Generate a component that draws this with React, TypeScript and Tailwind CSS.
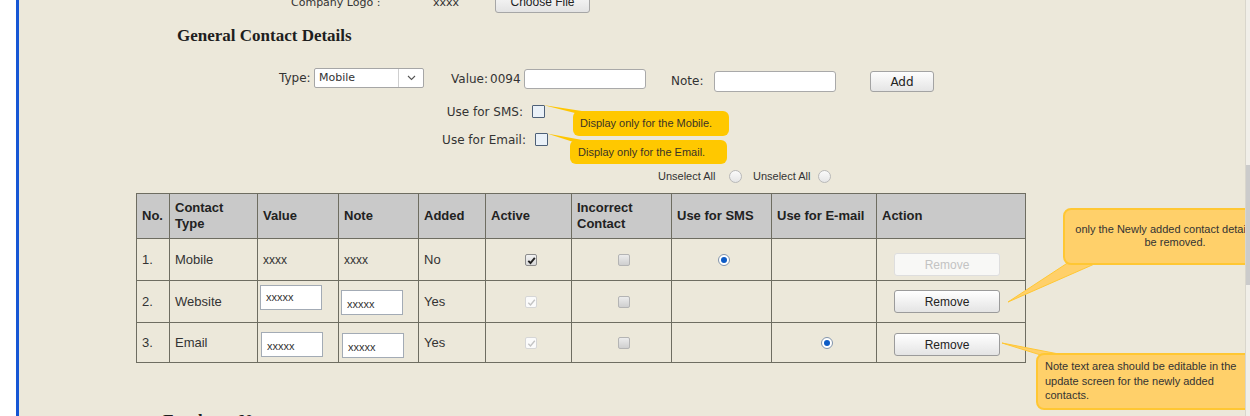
import React from 'react'

// Page coordinates: main panel starts at x=19 (white gutter 16px + blue rule 3px)

function CheckBox({ state }: { state: 'on' | 'onDisabled' | 'offDisabled' }) {
  if (state === 'on') {
    return (
      <span className="inline-flex h-[12px] w-[12px] items-center justify-center rounded-[2px] border border-[#8c8c8c] bg-gradient-to-b from-[#f2f2f2] to-[#d9d9d9] align-middle">
        <svg width="9" height="9" viewBox="0 0 9 9">
          <path d="M1.3 4.8 L3.5 7 L7.8 1.8" fill="none" stroke="#222" strokeWidth="1.9" />
        </svg>
      </span>
    )
  }
  if (state === 'onDisabled') {
    return (
      <span className="inline-flex h-[12px] w-[12px] items-center justify-center rounded-[2px] border border-[#d6d6d6] bg-[#fbfbfb] align-middle">
        <svg width="9" height="9" viewBox="0 0 9 9">
          <path d="M1.3 4.8 L3.5 7 L7.8 1.8" fill="none" stroke="#c4c4c4" strokeWidth="1.4" />
        </svg>
      </span>
    )
  }
  return (
    <span className="inline-block h-[12px] w-[12px] rounded-[2px] border border-[#b4b4b4] bg-gradient-to-b from-[#ececec] to-[#cfcfcf] align-middle" />
  )
}

function Radio({ checked }: { checked?: boolean }) {
  return (
    <span
      className={
        checked
          ? 'inline-flex h-[12px] w-[12px] items-center justify-center rounded-full border border-[#8294ab] bg-white align-middle'
          : 'inline-flex h-[13px] w-[13px] items-center justify-center rounded-full border border-[#b9b9b9] bg-gradient-to-b from-[#fafafa] to-[#e6e6e6] align-middle'
      }
    >
      {checked && <span className="h-[6px] w-[6px] rounded-full bg-[#0c5bc6]" />}
    </span>
  )
}

function RemoveBtn({ disabled }: { disabled?: boolean }) {
  return (
    <div
      className={
        disabled
          ? 'flex h-[23px] w-[106px] items-center justify-center rounded-[3px] border border-[#dedede] bg-[#f8f8f6] text-[12px] text-[#c3c3c3]'
          : 'flex h-[23px] w-[106px] items-center justify-center rounded-[3px] border border-[#9b9b9b] bg-gradient-to-b from-[#ffffff] to-[#e4e4e4] text-[12px] text-[#222]'
      }
    >
      Remove
    </div>
  )
}

function CellInput({ top }: { top?: boolean }) {
  return (
    <div
      className={
        top
          ? 'flex h-[25px] w-[62px] items-start border border-[#a3abb5] bg-white pl-[5px] pt-[3px] text-[11px] text-[#333]'
          : 'flex h-[25px] w-[62px] items-center border border-[#a3abb5] bg-white pl-[5px] pt-[3px] text-[11px] text-[#333]'
      }
    >
      xxxxx
    </div>
  )
}

const td = 'border border-[#6e6d61] pl-[5px] align-middle'

export default function App() {
  return (
    <div className="flex h-[416px] w-[1250px] overflow-hidden bg-white">
      <div className="w-4 shrink-0 bg-white" />
      <div className="w-[3px] shrink-0 bg-[#1656d4]" />

      <div className="relative min-w-0 flex-1 overflow-hidden bg-[#ece8da] font-['DejaVu_Sans',sans-serif] text-[12px] text-[#333]">
        {/* Company logo row (scrolled off the top) */}
        <div className="-mt-[9px] flex h-[22px] items-start">
          <span className="ml-[272px] mt-[5px] w-[142px] whitespace-nowrap text-[11px] leading-[14px]">Company Logo :</span>
          <span className="mt-[5px] w-[62px] text-[11px] leading-[14px]">xxxx</span>
          <div className="flex h-[22px] w-[95px] items-center justify-center rounded-[3px] border border-[#a6a6a6] bg-gradient-to-b from-[#fbfbfb] to-[#e3e3e3] font-['Liberation_Sans',Arial,sans-serif] text-[12px] text-[#222]">
            Choose File
          </div>
        </div>

        <h2 className="ml-[158px] mt-[13px] font-['Liberation_Serif','Times_New_Roman',serif] text-[17px] font-bold leading-[20px] text-[#1e1e1e]">
          General Contact Details
        </h2>

        {/* Add contact form */}
        <div className="mt-[22px] flex h-[24px] items-start">
          <span className="ml-[260px] w-[35px] leading-[20px]">Type:</span>
          <div className="flex h-[20px] w-[110px] rounded-[2px] border border-[#a6a6a6] bg-white">
            <span className="flex-1 pl-[4px] text-[11px] leading-[18px]">Mobile</span>
            <span className="flex w-[25px] items-center justify-center border-l border-[#cfcfcf]">
              <svg width="9" height="6" viewBox="0 0 9 6">
                <path d="M1 1 L4.5 4.5 L8 1" fill="none" stroke="#555" strokeWidth="1.1" />
              </svg>
            </span>
          </div>
          <span className="ml-[27px] mt-[1px] w-[73px] whitespace-nowrap leading-[20px]">
            Value:<span className="ml-[2px]">0094</span>
          </span>
          <div className="mt-[1px] h-[20px] w-[122px] rounded-[3px] border border-[#a9a9a9] bg-white" />
          <span className="ml-[25px] mt-[3px] w-[43px] leading-[20px]">Note:</span>
          <div className="mt-[3px] h-[21px] w-[122px] rounded-[3px] border border-[#a9a9a9] bg-white" />
          <div className="ml-[34px] mt-[3px] flex h-[21px] w-[64px] items-center justify-center rounded-[3px] border border-[#a3a3a3] bg-gradient-to-b from-[#fdfdfd] to-[#e5e5e5] text-[#222]">
            Add
          </div>
        </div>

        <div className="mt-[11px] flex h-[17px] items-center">
          <span className="w-[504px] text-right">Use for SMS:</span>
          <span className="ml-[9px] h-[13px] w-[13px] rounded-[1px] border border-[#4d6078] bg-[#eaf1f8]" />
        </div>
        <div className="mt-[11px] flex h-[17px] items-center">
          <span className="w-[507px] text-right">Use for Email:</span>
          <span className="ml-[9px] h-[13px] w-[13px] rounded-[1px] border border-[#4d6078] bg-[#eaf1f8]" />
        </div>

        <div className="mt-[21px] flex h-[14px] items-center font-['Liberation_Sans',Arial,sans-serif] text-[11px]">
          <span className="ml-[639px] w-[71px]">Unselect All</span>
          <Radio />
          <span className="ml-[11px] w-[65px]">Unselect All</span>
          <Radio />
        </div>

        {/* Contact table */}
        <table className="ml-[117px] mt-[10px] w-[889px] table-fixed border-collapse font-['Liberation_Sans',Arial,sans-serif] text-[13px] text-[#333]">
          <colgroup>
            <col className="w-[33px]" />
            <col className="w-[88px]" />
            <col className="w-[81px]" />
            <col className="w-[80px]" />
            <col className="w-[67px]" />
            <col className="w-[86px]" />
            <col className="w-[100px]" />
            <col className="w-[100px]" />
            <col className="w-[105px]" />
            <col className="w-[149px]" />
          </colgroup>
          <thead>
            <tr className="h-[45px] bg-[#c9c9c9] text-left text-[#222]">
              <th className={td + ' font-bold leading-[16px]'}>No.</th>
              <th className={td + ' font-bold leading-[16px]'}>Contact<br />Type</th>
              <th className={td + ' font-bold leading-[16px]'}>Value</th>
              <th className={td + ' font-bold leading-[16px]'}>Note</th>
              <th className={td + ' font-bold leading-[16px]'}>Added</th>
              <th className={td + ' font-bold leading-[16px]'}>Active</th>
              <th className={td + ' font-bold leading-[16px]'}>Incorrect<br />Contact</th>
              <th className={td + ' font-bold leading-[16px]'}>Use for SMS</th>
              <th className={td + ' font-bold leading-[16px]'}>Use for E-mail</th>
              <th className={td + ' font-bold leading-[16px]'}>Action</th>
            </tr>
          </thead>
          <tbody>
            <tr className="h-[42px]">
              <td className={td}>1.</td>
              <td className={td}>Mobile</td>
              <td className={td + ' text-[12px]'}>xxxx</td>
              <td className={td + ' text-[12px]'}>xxxx</td>
              <td className={td}>No</td>
              <td className={td + ' pl-0 text-center'}><CheckBox state="on" /></td>
              <td className={td + ' pl-0 text-center'}><CheckBox state="offDisabled" /></td>
              <td className={td + ' pl-0 text-center'}><Radio checked /></td>
              <td className={td} />
              <td className="border border-[#6e6d61] pl-[17px] pt-[14px] align-top"><RemoveBtn disabled /></td>
            </tr>
            <tr className="h-[42px]">
              <td className={td}>2.</td>
              <td className={td}>Website</td>
              <td className="border border-[#6e6d61] pl-[2px] pt-[4px] align-top"><CellInput top /></td>
              <td className="border border-[#6e6d61] pl-[2px] pt-[9px] align-top"><CellInput /></td>
              <td className={td}>Yes</td>
              <td className={td + ' pl-0 text-center'}><CheckBox state="onDisabled" /></td>
              <td className={td + ' pl-0 text-center'}><CheckBox state="offDisabled" /></td>
              <td className={td} />
              <td className={td} />
              <td className="border border-[#6e6d61] pl-[17px] pt-[9px] align-top"><RemoveBtn /></td>
            </tr>
            <tr className="h-[40px]">
              <td className={td}>3.</td>
              <td className={td}>Email</td>
              <td className="border border-[#6e6d61] pl-[3px] pt-[9px] align-top"><CellInput /></td>
              <td className="border border-[#6e6d61] pl-[3px] pt-[10px] align-top"><CellInput /></td>
              <td className={td}>Yes</td>
              <td className={td + ' pl-0 text-center'}><CheckBox state="onDisabled" /></td>
              <td className={td + ' pl-0 text-center'}><CheckBox state="offDisabled" /></td>
              <td className={td} />
              <td className={td + ' pl-0 text-center'}><Radio checked /></td>
              <td className="border border-[#6e6d61] pl-[17px] pt-[10px] align-top"><RemoveBtn /></td>
            </tr>
          </tbody>
        </table>

        <h2 className="ml-[144px] mt-[48px] font-['Liberation_Serif','Times_New_Roman',serif] text-[17px] font-bold leading-[20px] text-[#1e1e1e]">
          Employee Notes
        </h2>

        {/* Annotation pointers */}
        <svg className="pointer-events-none absolute left-0 top-0" width="1226" height="416">
          <polygon points="524,105 566,111.5 558,113.5" fill="#ffc600" />
          <polygon points="528,133.5 566,140.5 556,142.5" fill="#ffc600" />
          <polygon points="989,302 1050,262 1080,262" fill="#ffd06a" stroke="#ffc733" strokeWidth="1" />
          <polygon points="983,343 1025,356 1050,356" fill="#ffd06a" stroke="#ffc733" strokeWidth="1" />
        </svg>

        {/* Annotation callouts */}
        <div className="absolute left-[554px] top-[111px] flex h-[25px] w-[156px] items-center rounded-[6px] bg-[#ffc800] pl-[7px] font-['Liberation_Sans',Arial,sans-serif] text-[11px] text-[#3a3326]">
          Display only for the Mobile.
        </div>
        <div className="absolute left-[551px] top-[140px] flex h-[24px] w-[157px] items-center rounded-[6px] bg-[#ffc800] pl-[8px] font-['Liberation_Sans',Arial,sans-serif] text-[11px] text-[#3a3326]">
          Display only for the Email.
        </div>
        <div className="absolute left-[1044px] top-[208px] h-[57px] w-[224px] rounded-[8px] border-2 border-[#ffc733] bg-[#ffd06a] px-[4px] pt-[13px] text-center font-['Liberation_Sans',Arial,sans-serif] text-[11px] leading-[13px] text-[#333]">
          only the Newly added contact details can<br />be removed.
        </div>
        <div className="absolute left-[1017px] top-[353px] h-[57px] w-[240px] rounded-[8px] border-2 border-[#ffc733] bg-[#ffd06a] pl-[7px] pt-[4px] font-['Liberation_Sans',Arial,sans-serif] text-[11px] leading-[14.5px] text-[#333]">
          Note text area should be editable in the<br />update screen for the newly added<br />contacts.
        </div>
      </div>

      {/* scrollbar edge */}
      <div className="flex w-[5px] shrink-0 flex-col border-l border-[#d9d6cc] bg-[#f1efe9]">
        <div className="h-[165px] shrink-0" />
        <div className="h-[120px] shrink-0 bg-[#cbcbcb]" />
      </div>
    </div>
  )
}
